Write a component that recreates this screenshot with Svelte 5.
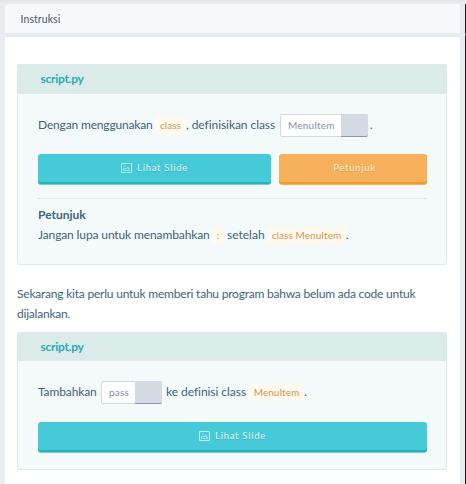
<script>
  const file = 'script.py';
</script>

{#snippet slideButton()}
  <button class="btn teal">
    <svg width="11" height="10" viewBox="0 0 11 10" fill="none" stroke="currentColor">
      <path d="M.5 .5h10v9H.5z" />
      <path d="M2.5 7.5v-2l1.5-.5 1.2 1L7 4l1.5 3.5H2.5M3 3h1.5" stroke-width=".8" />
    </svg>
    <span>Lihat Slide</span>
  </button>
{/snippet}

<div class="page">
  <main>
    <header>Instruksi</header>
    <div class="content">
      <section class="card first">
        <h2>{file}</h2>
        <div class="inner">
          <p class="row">
            <span class="t1">Dengan menggunakan</span><code class="c1">class</code><span class="t2">, definisikan class</span>
            <span class="answer a1"><span>MenuItem</span><i></i></span><span class="dot">.</span>
          </p>
          <div class="buttons">
            {@render slideButton()}
            <button class="btn orange"><span>Petunjuk</span></button>
          </div>
          <div class="hint">
            <strong>Petunjuk</strong>
            <p class="row">
              <span class="t3">Jangan lupa untuk menambahkan</span><code class="c2">:</code><span class="t4">setelah</span><code class="c3">class MenuItem</code><span>.</span>
            </p>
          </div>
        </div>
      </section>
      <p class="text">Sekarang kita perlu untuk memberi tahu program bahwa belum ada code untuk dijalankan.</p>
      <section class="card second">
        <h2>{file}</h2>
        <div class="inner">
          <p class="row">
            <span class="t5">Tambahkan</span>
            <span class="answer a2"><span>pass</span><i></i></span><span class="t6">ke definisi class</span><code class="c4">MenuItem</code><span>.</span>
          </p>
          <div class="buttons">{@render slideButton()}</div>
        </div>
      </section>
    </div>
  </main>
  <aside><i></i></aside>
</div>

<style>
  .page {
    box-sizing: border-box;
    width: 466px;
    height: 484px;
    padding: 4px 0 0 5px;
    display: flex;
    overflow: hidden;
    background: linear-gradient(#dfe6e9, #e8ecf1 3px);
    font: 12px/20px Lato, sans-serif;
    letter-spacing: -.12px;
    color: #3c647c;
  }
  .page * { box-sizing: border-box; }
  main { width: 455px; height: 480px; flex: none; }
  header {
    height: 29px;
    padding-left: 15.5px;
    border-radius: 4px 4px 0 0;
    background: #f8f9fd;
    color: #4b5368;
    font-size: 10.5px;
    line-height: 31px;
    letter-spacing: .08px;
  }
  .content { margin-top: 4px; height: 447px; padding: 27px 13px 0 12px; background: #fff; }
  aside { margin-left: 5px; width: 1px; height: 480px; background: #15191e; padding-top: 29px; }
  aside i { display: block; height: 3px; background: #6554c8; }
  .card { width: 430px; border: 1px solid #d9ece9; border-radius: 3px; background: #f4fafa; }
  .first { height: 201px; }
  .second { height: 138px; }
  h2 {
    margin: -1px -1px 0;
    height: 30px;
    padding-left: 23.5px;
    border-radius: 3px 3px 0 0;
    background: #daebea;
    color: #2aabb5;
    font-size: 12px;
    line-height: 29px;
    font-weight: 700;
    letter-spacing: -.28px;
  }
  .second h2 { height: 29px; }
  .inner { padding: 20px 19px 0 20px; }
  p { margin: 0; }
  .row { display: flex; align-items: center; height: 22px; white-space: nowrap; }
  .row > span { flex: none; }
  code {
    flex: none;
    height: 17px;
    border-radius: 3px;
    background: #fff9ef;
    color: #d99550;
    font: 10px/16px Lato, sans-serif;
    letter-spacing: .03px;
    text-align: center;
  }
  .t1 { width: 117px; letter-spacing: -.16px; }
  .c1 { width: 31px; }
  .t2 { width: 94px; letter-spacing: -.06px; }
  .t3 { width: 174px; }
  .c2 { width: 12px; margin-right: 3px; }
  .t4 { width: 40px; letter-spacing: 0; }
  .c3 { width: 79px; letter-spacing: .08px; }
  .t5 { width: 63px; }
  .t6 { width: 83px; margin-left: 4px; letter-spacing: -.05px; }
  .c4 { width: 55px; }
  .dot { margin-left: 2px; }
  .answer {
    display: flex;
    height: 23px;
    border: 1px solid #d3dae3;
    border-radius: 2px;
    background: #fff;
    color: #8990a4;
    font-size: 10px;
    line-height: 20px;
    letter-spacing: .18px;
  }
  .answer span { flex: 1; padding-left: 7px; }
  .answer i { flex: none; margin: -1px; background: #d3dae3; border-bottom: 1.5px solid #8c96aa; border-radius: 0 2px 2px 0; }
  .a1 { width: 88px; }
  .a1 i { width: 27px; }
  .a2 { width: 61px; }
  .a2 i { width: 27px; }
  .buttons { display: flex; gap: 8px; margin-top: 18px; }
  .second .buttons { margin-top: 19px; }
  .btn {
    height: 30px;
    border: 0;
    border-radius: 3px;
    padding: 0 0 2px;
    display: flex;
    align-items: center;
    justify-content: center;
    gap: 5px;
    color: #e5f8f8;
    font: 9.5px/20px Lato, sans-serif;
    letter-spacing: .72px;
    text-shadow: 0 1px 1px #0002;
  }
  .teal { flex: 1; background: #46cad7; box-shadow: inset 0 -2px #28b2c0, 0 1px #71cfd5; }
  .orange { width: 148px; padding-left: 3px; background: #f7b05b; box-shadow: inset 0 -2px #f29b2b, 0 1px #f4b15d; color: #fff1df; }
  svg { opacity: .75; }
  .hint { margin-top: 14px; border-top: 1px solid #d3ece9; padding-top: 6px; }
  .hint strong { display: block; height: 20px; letter-spacing: 0; }
  .hint .row { height: 20px; }
  .text { height: 67px; padding-top: 19px; letter-spacing: -.215px; }
</style>
